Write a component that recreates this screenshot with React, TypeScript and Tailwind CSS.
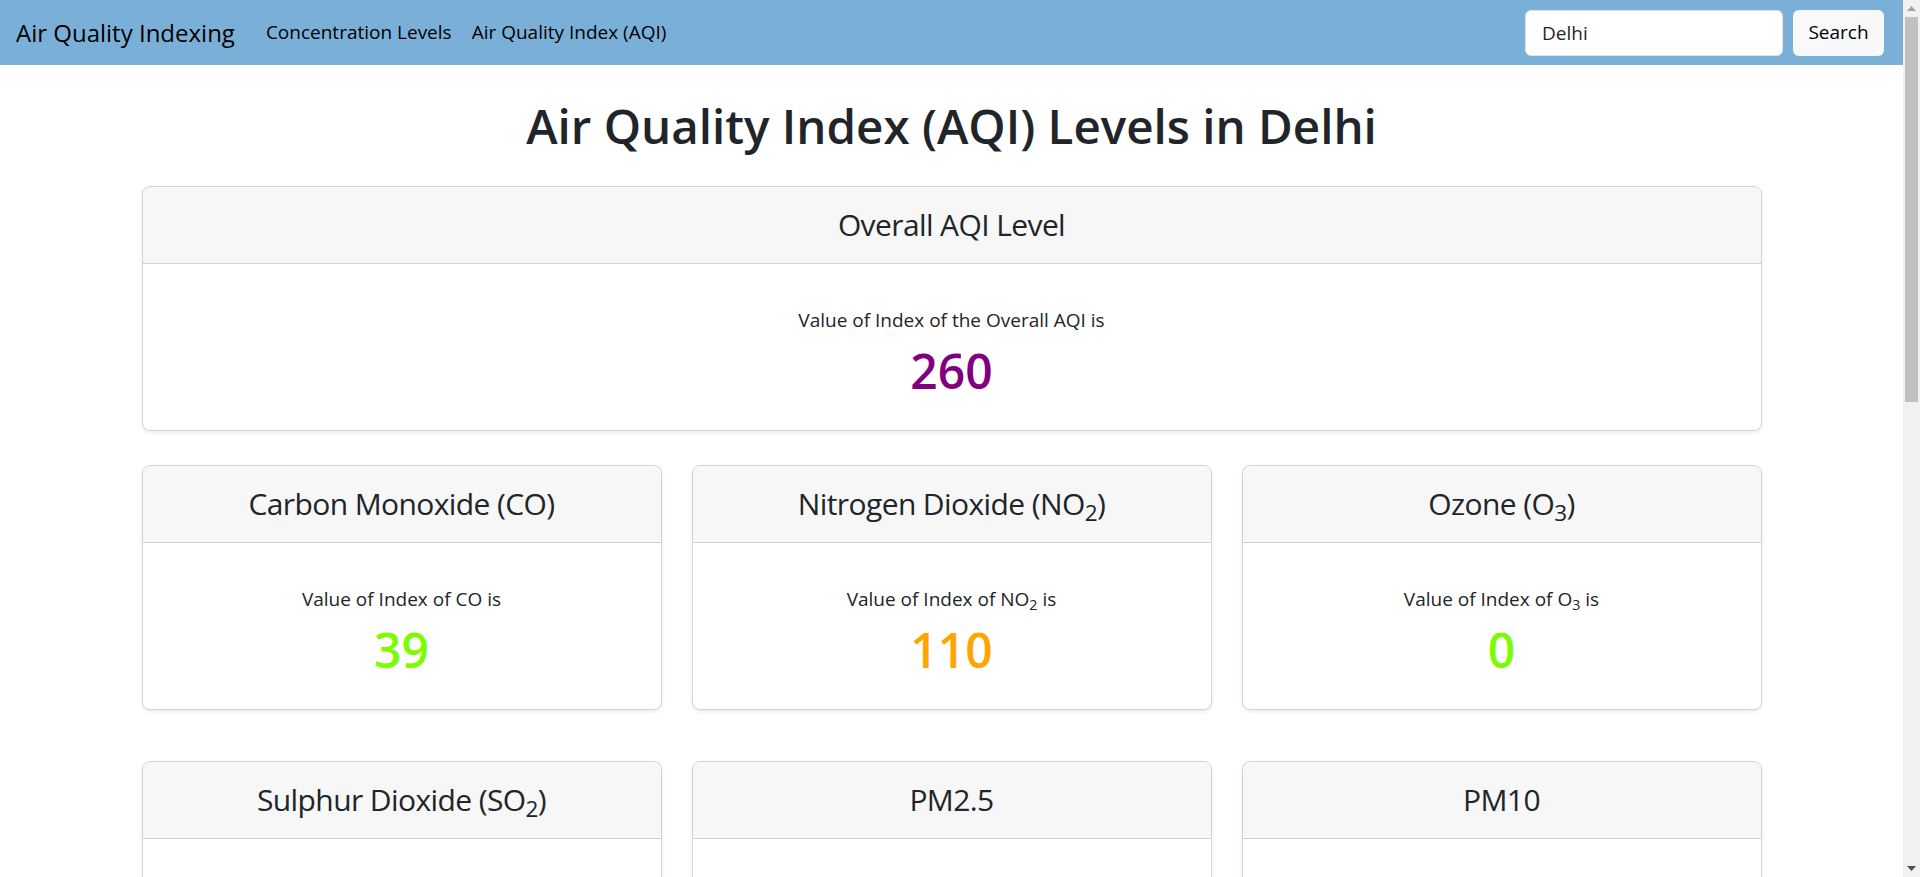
import React from "react";

type Pollutant = {
  title: React.ReactNode;
  label: React.ReactNode;
  value: number;
  color: string;
};

const pollutants: Pollutant[] = [
  { title: "Carbon Monoxide (CO)", label: "CO", value: 39, color: "text-[#7cfc00]" },
  {
    title: (
      <>
        Nitrogen Dioxide (NO<sub>2</sub>)
      </>
    ),
    label: (
      <>
        NO<sub>2</sub>
      </>
    ),
    value: 110,
    color: "text-[#ffa500]",
  },
  {
    title: (
      <>
        Ozone (O<sub>3</sub>)
      </>
    ),
    label: (
      <>
        O<sub>3</sub>
      </>
    ),
    value: 0,
    color: "text-[#7cfc00]",
  },
  {
    title: (
      <>
        Sulphur Dioxide (SO<sub>2</sub>)
      </>
    ),
    label: (
      <>
        SO<sub>2</sub>
      </>
    ),
    value: 12,
    color: "text-[#7cfc00]",
  },
  { title: "PM2.5", label: "PM2.5", value: 260, color: "text-[#800080]" },
  { title: "PM10", label: "PM10", value: 225, color: "text-[#800080]" },
];

const AqiCard = ({ title, label, value, color }: Pollutant) => {
  return (
    <div className="rounded-lg border border-[#d3d3d3] bg-white shadow-[0_2px_4px_rgba(0,0,0,0.08)] overflow-hidden">
      <div className="h-[77px] flex items-center justify-center bg-[#f7f7f7] border-b border-[#d3d3d3]">
        <h2 className="text-[30px] leading-[1.2] tracking-[-0.6px] text-[#212529]">{title}</h2>
      </div>
      <div className="h-[166px] flex flex-col items-center pt-[41px]">
        <p className="text-[19px] leading-[30px] text-[#212529]">Value of Index of {label} is</p>
        <p className={`mt-[7px] text-[48px] leading-[58px] font-semibold ${color}`}>{value}</p>
      </div>
    </div>
  );
};

// page scrollbar as it shows in the screenshot
const ScrollBar = () => (
  <div className="w-[17px] h-full flex flex-col bg-[#f1f1f1]">
    <div className="h-[17px] flex items-center justify-center">
      <svg width="9" height="5" viewBox="0 0 9 5">
        <polygon points="0,5 4.5,0 9,5" fill="#a3a3a3" />
      </svg>
    </div>
    <div className="flex-1 px-[2px]">
      <div className="h-[385px] bg-[#c1c1c1]" />
    </div>
    <div className="h-[17px] flex items-center justify-center">
      <svg width="9" height="5" viewBox="0 0 9 5">
        <polygon points="0,0 4.5,5 9,0" fill="#505050" />
      </svg>
    </div>
  </div>
);

export default function App() {
  const [city, setCity] = React.useState("Delhi");

  return (
    <div className="h-screen flex overflow-hidden bg-white font-['Open_Sans',sans-serif] text-[#212529]">
      <div className="flex-1 overflow-y-auto">
        <nav className="h-[65px] bg-[#7ab0d7] flex items-center justify-between pl-[16px] pr-[19px]">
          <div className="flex items-center">
            <a href="#" className="text-[24px] text-black">
              Air Quality Indexing
            </a>
            <div className="flex items-center gap-[20px] ml-[31px] text-[19px] text-black">
              <a href="#">Concentration Levels</a>
              <a href="#">Air Quality Index (AQI)</a>
            </div>
          </div>
          <form className="flex items-center gap-[10px]" onSubmit={(e) => e.preventDefault()}>
            <input
              value={city}
              onChange={(e) => setCity(e.target.value)}
              className="w-[258px] h-[46px] rounded-md bg-white border border-[#dee2e6] px-[16px] text-[19px] text-[#212529] outline-none"
            />
            <button className="w-[91px] h-[46px] rounded-md bg-[#f8f9fa] text-[19px] text-black">Search</button>
          </form>
        </nav>

        <main className="w-[1620px] mx-auto pb-[60px]">
          <h1 className="mt-[32px] text-center text-[47.5px] leading-[57px] font-semibold text-[#212529]">
            Air Quality Index (AQI) Levels in Delhi
          </h1>

          <div className="mt-[32px] rounded-lg border border-[#d3d3d3] bg-white shadow-[0_2px_4px_rgba(0,0,0,0.08)] overflow-hidden">
            <div className="h-[77px] flex items-center justify-center bg-[#f7f7f7] border-b border-[#d3d3d3]">
              <h2 className="text-[30px] leading-[1.2] tracking-[-0.6px]">Overall AQI Level</h2>
            </div>
            <div className="h-[166px] flex flex-col items-center pt-[41px]">
              <p className="text-[19px] leading-[30px]">Value of Index of the Overall AQI is</p>
              <p className="mt-[7px] text-[48px] leading-[58px] font-semibold text-[#800080]">260</p>
            </div>
          </div>

          <div className="mt-[34px] grid grid-cols-3 gap-x-[30px] gap-y-[51px]">
            {pollutants.map((p, i) => (
              <AqiCard key={i} {...p} />
            ))}
          </div>
        </main>
      </div>
      <ScrollBar />
    </div>
  );
}
